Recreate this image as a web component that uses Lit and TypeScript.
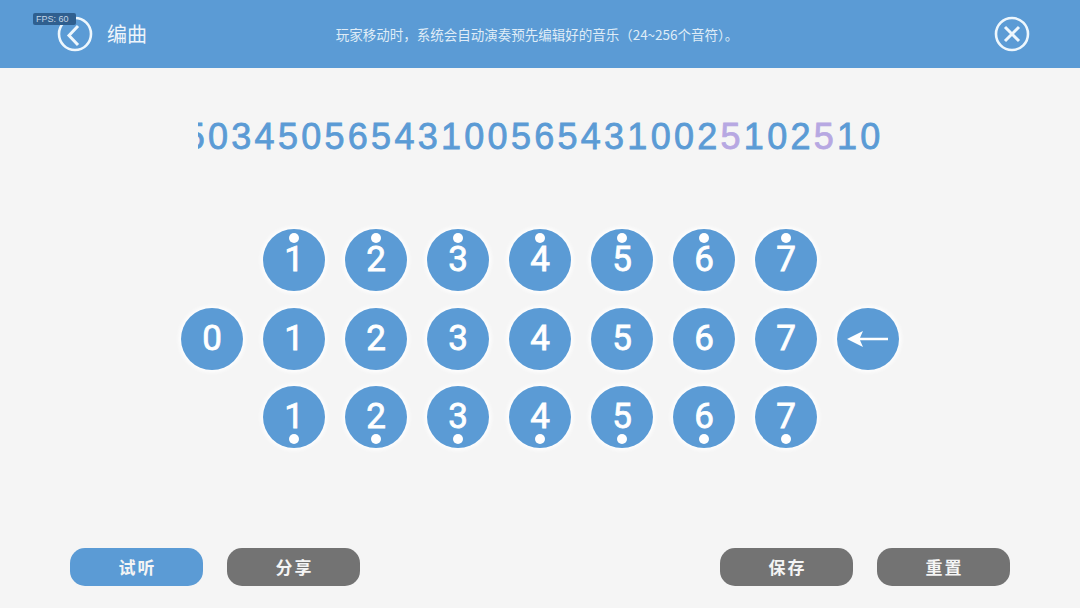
import { LitElement, html, css, svg } from "lit";
import { customElement } from "lit/decorators.js";

const SEQ = "503450565431005654310025102510".split("");
const DIGITS = ["1", "2", "3", "4", "5", "6", "7"];

@customElement("app-root")
export class AppRoot extends LitElement {
  static styles = css`
    :host {
      display: block;
      width: 1080px;
      height: 608px;
      overflow: hidden;
      position: relative;
      background: #f5f5f5;
      font-family: "Liberation Sans", "Noto Sans CJK SC", sans-serif;
    }
    .page { display: flex; flex-direction: column; height: 608px; }
    .header {
      height: 68px;
      flex: none;
      background: #5b9bd5;
      display: grid;
      grid-template-columns: 1fr auto 1fr;
      align-items: center;
      padding: 0 50px 0 57px;
      color: #fff;
    }
    .left { display: flex; align-items: center; gap: 14px; }
    .icon { display: block; width: 36px; height: 36px; }
    .title {
      font: 400 20px "Noto Sans CJK SC", sans-serif;
      color: #eef5fb;
      padding-bottom: 2px;
    }
    .sub {
      font: 400 13.5px "Noto Sans CJK SC", sans-serif;
      color: #dfecf7;
      padding-right: 13px;
      white-space: nowrap;
    }
    .right { justify-self: end; }
    .fps {
      position: absolute;
      left: 33px;
      top: 13px;
      width: 43px;
      height: 12px;
      border-radius: 2px;
      background: #2f5f8f;
      color: #c5d6e6;
      font: 400 9px/12px "Liberation Sans", sans-serif;
      padding-left: 3px;
      box-sizing: border-box;
    }
    .seq-wrap { display: flex; justify-content: center; padding-top: 48px; }
    .seq {
      width: 684px;
      height: 42px;
      overflow: hidden;
      display: flex;
      justify-content: flex-end;
      font: 400 36px/42px "Liberation Sans", sans-serif;
      -webkit-text-stroke: 0.8px #5b9bd5;
      color: #5b9bd5;
      white-space: nowrap;
    }
    .seq span { flex: none; width: 23.3px; text-align: center; }
    .seq .hl { color: #b7a8e2; -webkit-text-stroke: 0.8px #b7a8e2; }
    .pad {
      margin-top: 71px;
      display: flex;
      flex-direction: column;
      gap: 16.5px;
    }
    .row {
      display: flex;
      justify-content: center;
      gap: 20px;
    }
    .key {
      position: relative;
      flex: none;
      width: 62px;
      height: 62px;
      border-radius: 50%;
      background: #5b9bd5;
      box-shadow: 0 0 4px 2px #ffffff;
      display: flex;
      align-items: center;
      justify-content: center;
      color: #fff;
      font: 400 35px/62px "Roboto", sans-serif;
      -webkit-text-stroke: 0.8px #fff;
    }
    .dot {
      position: absolute;
      left: 26px;
      width: 10px;
      height: 10px;
      border-radius: 50%;
      background: #fff;
    }
    .dot.up { top: 4px; }
    .dot.down { bottom: 4px; }
    .arrow { display: block; width: 62px; height: 62px; }
    .footer {
      margin-top: auto;
      padding: 0 70px 22px;
      display: flex;
      justify-content: space-between;
    }
    .group { display: flex; gap: 24px; }
    .btn {
      width: 133px;
      height: 38px;
      border-radius: 15px;
      background: #737373;
      color: #f4f4f4;
      display: flex;
      align-items: center;
      justify-content: center;
      box-sizing: border-box;
      padding: 0 0 2px 2px;
      font: 700 17px "Noto Sans CJK SC", sans-serif;
      letter-spacing: 2px;
    }
    .btn.blue { background: #5b9bd5; }
  `;

  private key(d: string, dot: "" | "up" | "down") {
    return html`<div class="key">
      ${d}${dot ? html`<i class="dot ${dot}"></i>` : ""}
    </div>`;
  }

  render() {
    return html`<div class="page">
      <div class="header">
        <div class="left">
          <svg class="icon" viewBox="0 0 36 36" fill="none" stroke="#eef7fd" stroke-width="2.6">
            <circle cx="18" cy="18" r="16"></circle>
            ${svg`<path stroke-width="3" d="M21 10 L12 19.500 L21 29"></path>`}
          </svg>
          <div class="title">编曲</div>
        </div>
        <div class="sub">玩家移动时，系统会自动演奏预先编辑好的音乐（24~256个音符）。</div>
        <div class="right">
          <svg class="icon" viewBox="0 0 36 36" fill="none" stroke="#eef7fd" stroke-width="2.6">
            <circle cx="18" cy="18" r="16"></circle>
            ${svg`<path stroke-width="3" d="M11 11 L25 25 M25 11 L11 25"></path>`}
          </svg>
        </div>
      </div>
      <div class="seq-wrap">
        <div class="seq">
          ${SEQ.map((c, i) => html`<span class=${i === 23 || i === 27 ? "hl" : ""}>${c}</span>`)}
        </div>
      </div>
      <div class="pad">
        <div class="row">${DIGITS.map((d) => this.key(d, "up"))}</div>
        <div class="row">
          ${this.key("0", "")}
          ${DIGITS.map((d) => this.key(d, ""))}
          <div class="key">
            <svg class="arrow" viewBox="0 0 62 62" fill="#fff">
              ${svg`<path d="M10 31 L26 23 L23 29.800 H51 V32.200 H23 L26 39 Z"></path>`}
            </svg>
          </div>
        </div>
        <div class="row">${DIGITS.map((d) => this.key(d, "down"))}</div>
      </div>
      <div class="footer">
        <div class="group">
          <div class="btn blue">试听</div>
          <div class="btn">分享</div>
        </div>
        <div class="group">
          <div class="btn">保存</div>
          <div class="btn">重置</div>
        </div>
      </div>
      <div class="fps">FPS: 60</div>
    </div>`;
  }
}
